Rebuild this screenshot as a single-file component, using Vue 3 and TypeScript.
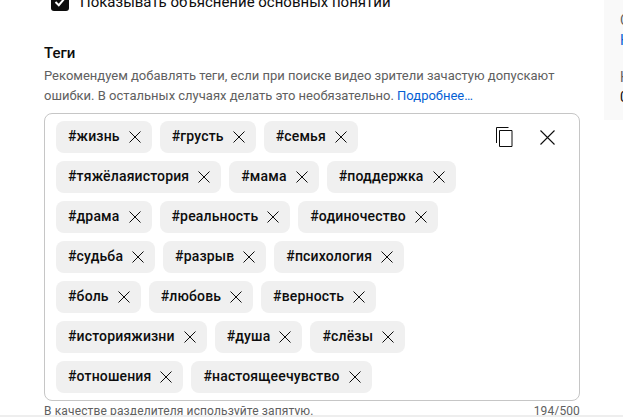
<script setup lang="ts">
const tags = ['жизнь','грусть','семья','тяжёлаяистория','мама','поддержка','драма','реальность','одиночество','судьба','разрыв','психология','боль','любовь','верность','историяжизни','душа','слёзы','отношения','настоящеечувство']
</script>

<template>
  <div class="page">
    <main class="main">
      <label class="check">
        <span class="box"><svg width="14" height="14" viewBox="0 0 14 14"><path d="M2.5 7 L5.8 10.2 L11.5 3.5" fill="none" stroke="#fff" stroke-width="2"/></svg></span>
        <span>Показывать объяснение основных понятий</span>
      </label>
      <h3 class="title">Теги</h3>
      <p class="desc">Рекомендуем добавлять теги, если при поиске видео зрители зачастую допускают ошибки. В остальных случаях делать это необязательно. <a class="link">Подробнее…</a></p>
      <div class="field">
        <div class="chips">
          <span v-for="t in tags" :key="t" class="chip">
            <span class="label">#{{ t }}</span>
            <svg class="x" width="12" height="12" viewBox="0 0 12 12"><path d="M.5.5l11 11M11.5.5l-11 11" stroke="#0d0d0d" fill="none"/></svg>
          </span>
        </div>
        <div class="tools">
          <svg width="17" height="20" viewBox="0 0 17 20"><path d="M.5 16V.5H12.5M3.5 3.5h12.5v16H3.5z" fill="none" stroke="#0d0d0d" stroke-width="1"/></svg>
          <svg width="15" height="15" viewBox="0 0 15 15"><path d="M.5.5l14 14M14.5.5l-14 14" stroke="#0d0d0d" stroke-width="1.1" fill="none"/></svg>
        </div>
      </div>
      <div class="foot"><span>В качестве разделителя используйте запятую.</span><span>194/500</span></div>
    </main>
    <aside class="side">
      <div class="s1">С</div>
      <div class="s2">К</div>
      <div class="s3">Н</div>
      <div class="s4">0</div>
    </aside>
    <div class="bottom"></div>
  </div>
</template>

<style scoped>
.page { position: relative; width: 623px; height: 417px; overflow: hidden; background: #fff; font-family: Roboto, sans-serif; color: #0d0d0d; display: flex; }
.main { width: 536px; margin-left: 44px; margin-top: -10px; flex: none; }
.check { display: flex; align-items: center; gap: 11px; height: 24px; margin-left: 7px; font-size: 15px; }
.box { width: 18px; height: 18px; background: #0d0d0d; border-radius: 3px; display: flex; align-items: center; justify-content: center; }
.title { margin: 29px 0 0; font-size: 15px; line-height: 20px; font-weight: 500; }
.desc { margin: 3px 0 0; font-size: 13px; line-height: 20px; color: #606060; }
.link { color: #065fd4; }
.field { position: relative; box-sizing: border-box; height: 288px; margin-top: 7px; border: 1px solid #c6c6c6; border-radius: 8px; padding: 7px 11px; }
.chips { display: flex; flex-wrap: wrap; gap: 8px 8px; width: 420px; }
.chip { display: flex; align-items: center; gap: 9px; height: 32px; padding: 0 11px 0 12px; background: #f0f0f0; border-radius: 8px; font-size: 14px; font-weight: 500; letter-spacing: .16px; }
.label { margin-bottom: 2px; }
.x { flex: none; }
.tools { position: absolute; top: 7px; right: 24px; height: 32px; display: flex; align-items: center; gap: 27px; }
.foot { display: flex; justify-content: space-between; margin-top: 2px; font-size: 12px; letter-spacing: .13px; line-height: 16px; color: #606060; }
.side { position: absolute; left: 604px; top: 0; width: 19px; height: 120px; background: #f9f9f9; padding-left: 16px; box-sizing: border-box; font-size: 14px; line-height: 20px; overflow: hidden; }
.s1 { margin-top: 10px; color: #606060; }
.s2 { color: #065fd4; }
.s3 { margin-top: 17px; color: #606060; }
.s4 { color: #0d0d0d; }
.bottom { position: absolute; left: 0; right: 0; bottom: 0; height: 2px; background: #eee; }
</style>
